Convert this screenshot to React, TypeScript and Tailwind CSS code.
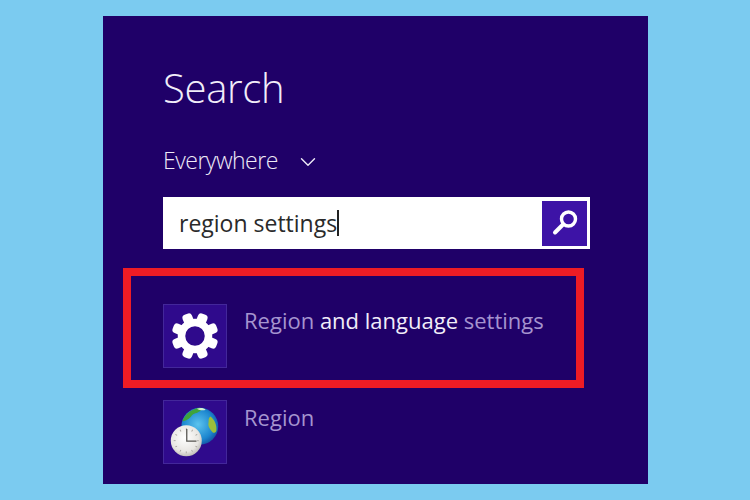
import { ChevronDown } from 'lucide-react'

function Gear() {
  const teeth = [22.5, 67.5, 112.5, 157.5, 202.5, 247.5, 292.5, 337.5]
  return (
    <svg width="50" height="50" viewBox="0 0 50 50">
      {teeth.map(a => (
        <rect key={a} x="20" y="1.5" width="10" height="12" rx="3.5" fill="#fff" transform={`rotate(${a} 25 25)`} />
      ))}
      <circle cx="25" cy="25" r="13.5" fill="none" stroke="#fff" strokeWidth="7.5" />
    </svg>
  )
}

function Lens() {
  return (
    <svg width="30" height="30" viewBox="0 0 30 30">
      <circle cx="18.5" cy="11" r="7" fill="none" stroke="#fff" strokeWidth="3.4" />
      <path d="M13 16.5 5 24.5" stroke="#fff" strokeWidth="4" strokeLinecap="round" />
    </svg>
  )
}

function GlobeClock() {
  const ticks = [0, 30, 60, 90, 120, 150, 180, 210, 240, 270, 300, 330]
  return (
    <svg width="64" height="64" viewBox="0 0 64 64">
      <defs>
        <radialGradient id="sea" cx="0.45" cy="0.45" r="0.6">
          <stop offset="0" stopColor="#5cc4ee" />
          <stop offset="0.7" stopColor="#1c86cf" />
          <stop offset="1" stopColor="#12509f" />
        </radialGradient>
        <radialGradient id="face" cx="0.45" cy="0.4" r="0.65">
          <stop offset="0" stopColor="#ffffff" />
          <stop offset="0.7" stopColor="#e8e6e2" />
          <stop offset="1" stopColor="#b5b2ac" />
        </radialGradient>
      </defs>
      <circle cx="37" cy="26" r="19" fill="url(#sea)" />
      <path d="M19 21c3-8 10-13 18-14 3 0 2 3-1 4-3 2-7 2-8 5-2 2-4 4-9 5z" fill="#3fa33c" />
      <path d="M48 16c4 3 7 9 6 15-1 2-3 3-5 0-2-3-4-5-3-9 0-3 0-5 2-6z" fill="#9cbf3a" />
      <path d="M34 8c3-1 7-1 9 1-2 1-6 1-9-1z" fill="#d4efd0" />
      <circle cx="23" cy="41" r="16" fill="url(#face)" />
      {ticks.map(a => (
        <rect key={a} x="22.6" y="28" width="0.9" height="2" fill="#a5a29c" transform={`rotate(${a} 23 41)`} />
      ))}
      <path d="M23.5 29v12.5h10" fill="none" stroke="#55534f" strokeWidth="1.3" />
    </svg>
  )
}

function Result({ icon, children, textClass }: { icon: React.ReactNode; children: React.ReactNode; textClass: string }) {
  return (
    <div className="flex items-start gap-[17px]">
      <div className="w-[64px] h-[64px] flex items-center justify-center bg-[#2f0a8c] border border-[#43279a] shrink-0">
        {icon}
      </div>
      <div className={`text-[22px] leading-[30px] text-[#a594cf] ${textClass}`}>{children}</div>
    </div>
  )
}

export default function App() {
  return (
    <div
      className="w-[750px] h-[500px] bg-[#7bcbf0] pt-[16px] pl-[103px] overflow-hidden"
      style={{ fontFamily: '"Open Sans", "Noto Sans", sans-serif' }}
    >
      <div className="relative w-[545px] h-[468px] bg-[#1f0068] pl-[60px] pr-[58px] pt-[47px]">
        <h1 className="text-[40px] leading-[50px] font-[350] text-[#f1edf9] tracking-[-0.3px]">Search</h1>
        <div className="flex items-center mt-[32px] h-[30px] text-[23px] tracking-[-0.5px] font-[350] text-[#eeeaf7]">
          Everywhere
          <ChevronDown size={26} strokeWidth={1.3} className="ml-[17px] mt-[3px]" />
        </div>
        <div className="mt-[22px] h-[52px] bg-white flex items-center justify-between pl-[16px] pr-[3px]">
          <div className="flex items-center text-[23px] text-[#2a2a2a]">
            region settings
            <span className="w-[1.5px] h-[26px] bg-[#222]" />
          </div>
          <div className="w-[45px] h-[45px] bg-[#3d13a6] flex items-center justify-center">
            <Lens />
          </div>
        </div>
        <div className="mt-[55px] flex flex-col gap-[32px]">
          <Result icon={<Gear />} textClass="mt-[1px]">
            Region <span className="text-[#f1edf9]">and language</span> settings
          </Result>
          <Result icon={<GlobeClock />} textClass="mt-[2px]">Region</Result>
        </div>
        <div className="absolute left-[20px] top-[252px] w-[461px] h-[120px] border-[8px] border-[#ee1c25]" />
      </div>
    </div>
  )
}
